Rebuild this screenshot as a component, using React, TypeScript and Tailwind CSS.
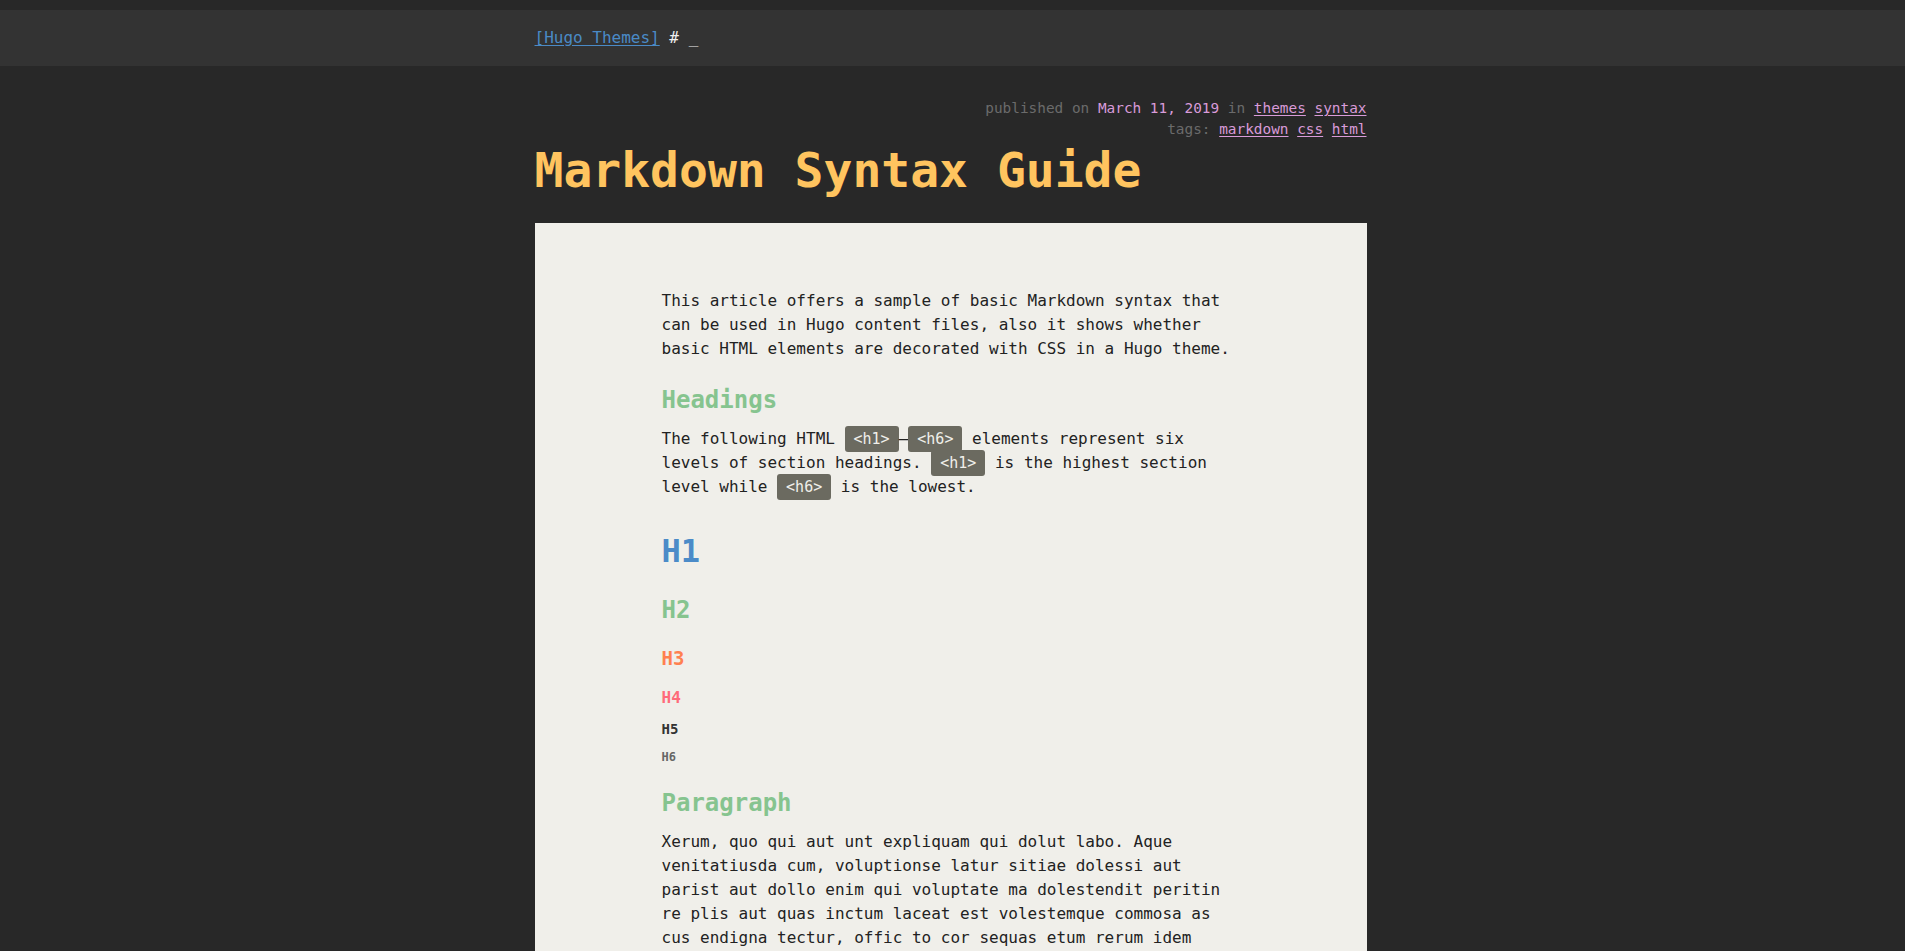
import React from 'react';

const mono = "font-['DejaVu_Sans_Mono','Liberation_Mono',monospace]";

const Code: React.FC<{ children: React.ReactNode }> = ({ children }) => (
  <code className="font-['DejaVu_Sans_Mono','Liberation_Mono',monospace] bg-[#6b6a60] text-[#f0efea] text-[15px] px-[9px] py-[4px] rounded-[3px]">
    {children}
  </code>
);

const App: React.FC = () => {
  return (
    <div className={`min-h-screen bg-[#282828] pt-[10px] ${mono}`}>
      {/* top bar */}
      <header className="bg-[#333333] h-[56px] flex items-center">
        <div className="w-[832px] mx-auto -translate-x-[2px] text-[16px] text-[#eeeeee]">
          <a href="#" className="text-[#4a8ac6] underline underline-offset-2">[Hugo Themes]</a>
          <span> # _</span>
        </div>
      </header>

      <main className="w-[832px] mx-auto -translate-x-[2px]">
        {/* meta */}
        <div className="mt-[32px] text-right text-[14.4px] leading-[21px] text-[#6b6b6b]">
          <div>
            published on <span className="text-[#d99bd9]">March 11, 2019</span> in{' '}
            <a href="#" className="text-[#d99bd9] underline underline-offset-2">themes</a>{' '}
            <a href="#" className="text-[#d99bd9] underline underline-offset-2">syntax</a>
          </div>
          <div>
            tags:{' '}
            <a href="#" className="text-[#d99bd9] underline underline-offset-2">markdown</a>{' '}
            <a href="#" className="text-[#d99bd9] underline underline-offset-2">css</a>{' '}
            <a href="#" className="text-[#d99bd9] underline underline-offset-2">html</a>
          </div>
        </div>

        <h1 className="mt-[2px] text-[48px] leading-[56px] font-bold text-[#ffc45f]">
          Markdown Syntax Guide
        </h1>

        {/* article */}
        <article className="mt-[25px] bg-[#f0efea] pt-[66px] pb-[64px] text-[#222222]">
          <div className="w-[578px] mx-auto text-[16px] leading-[24px]">
            <p>
              This article offers a sample of basic Markdown syntax that can be used in Hugo
              content files, also it shows whether basic HTML elements are decorated with CSS in
              a Hugo theme.
            </p>

            <h2 className="mt-[23px] text-[24px] leading-[32px] font-bold text-[#86c48f]">Headings</h2>
            <p className="mt-[11px]">
              The following HTML <Code>&lt;h1&gt;</Code>—<Code>&lt;h6&gt;</Code> elements represent
              six levels of section headings. <Code>&lt;h1&gt;</Code> is the highest section level
              while <Code>&lt;h6&gt;</Code> is the lowest.
            </p>

            <h1 className="mt-[32px] text-[32px] leading-[40px] font-bold text-[#4b8bc8]">H1</h1>
            <h2 className="mt-[23px] text-[24px] leading-[32px] font-bold text-[#86c48f]">H2</h2>
            <h3 className="mt-[19px] text-[19px] leading-[26px] font-bold text-[#ff8050]">H3</h3>
            <h4 className="mt-[16px] text-[16px] leading-[22px] font-bold text-[#ff6b7a]">H4</h4>
            <h5 className="mt-[10px] text-[14px] leading-[20px] font-bold text-[#333333]">H5</h5>
            <h6 className="mt-[9px] text-[12px] leading-[18px] font-bold text-[#666666]">H6</h6>

            <h2 className="mt-[21px] text-[24px] leading-[32px] font-bold text-[#86c48f]">Paragraph</h2>
            <p className="mt-[11px]">
              Xerum, quo qui aut unt expliquam qui dolut labo. Aque venitatiusda cum, voluptionse
              latur sitiae dolessi aut parist aut dollo enim qui voluptate ma dolestendit peritin
              re plis aut quas inctum laceat est volestemque commosa as cus endigna tectur, offic
              to cor sequas etum rerum idem sintibus eiur? Quianimin porecus evelectur, cum que nis
              nust voloribus ratem aut omnimi, sitatur? Quiatem. Nam, omnis sum am facea corem
              alique molestrunt et eos evelece arcillit ut aut eos eos nus, sin conecerem erum
              fuga. Ri oditatquam, ad quibus unda veliamenimin cusam et facea ipsamus es exerum
              sitate dolores editium rerore eost, temped molorro ratiae volorro te reribus dolorer
              sperchicium faceata tiustia prat.
            </p>
          </div>
        </article>
      </main>
    </div>
  );
};

export default App;
